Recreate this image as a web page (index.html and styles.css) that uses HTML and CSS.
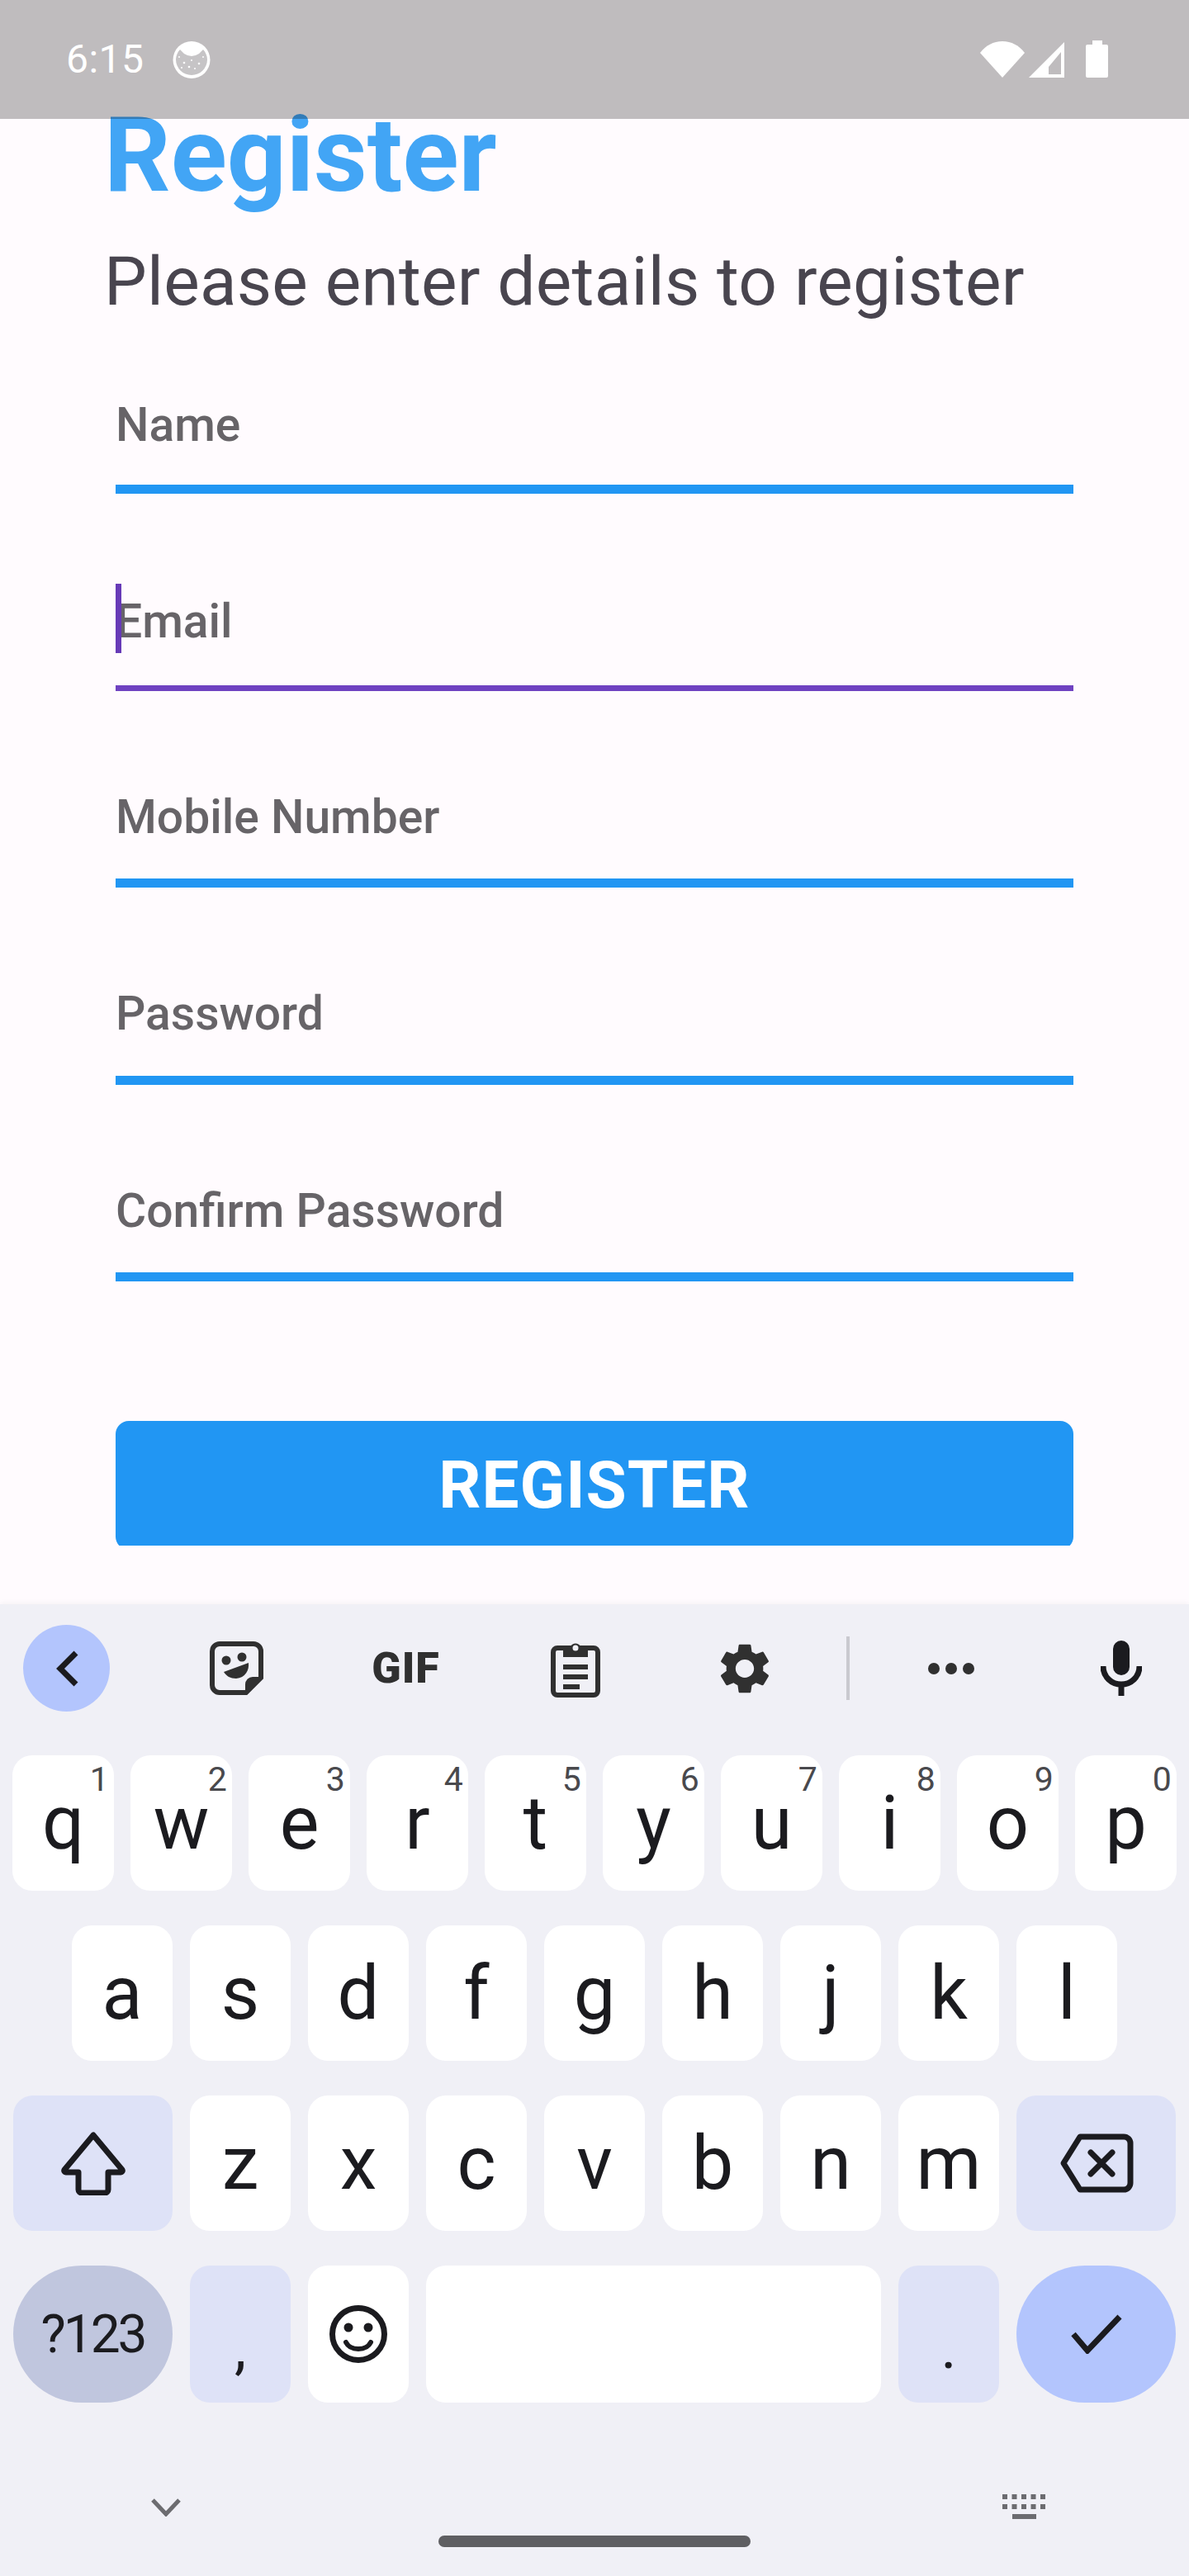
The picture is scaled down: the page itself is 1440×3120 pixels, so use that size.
FILE: index.html
```html
<!DOCTYPE html>
<html lang="en">

<head>
    <meta charset="UTF-8">
    <title>Register</title>
    <link rel="stylesheet" href="styles.css">
</head>

<body>
    <div class="screen">
        <!-- status bar is see-through, the title runs under it -->
        <div class="status">
            <span class="time">6:15</span>
            <svg class="status-face" viewBox="0 0 48 46">
                <circle cx="24" cy="22.500" r="22.500" fill="#fff" />
                <path d="M10 10L15 15Q24 21 33 15L38 10C41 13 43 18 43 22A19 19 0 0 1 5 22C5 18 7 13 10 10z" fill="#c6c4c6" />
                <circle cx="9" cy="19" r="1" fill="#fff" />
                <circle cx="15" cy="26" r="1.300" fill="#fff" />
                <circle cx="24" cy="23" r="1" fill="#fff" />
                <circle cx="33" cy="27" r="1.300" fill="#fff" />
                <circle cx="38" cy="19" r="1" fill="#fff" />
                <circle cx="21" cy="31" r="1.300" fill="#fff" />
                <circle cx="28" cy="33" r="1" fill="#fff" />
                <circle cx="12" cy="32" r="1" fill="#fff" />
            </svg>
            <span class="status-gap"></span>
            <svg class="status-wifi" viewBox="0 0 54 44">
                <path d="M0 14C7 5 16 0 27 0s20 5 27 14L27 44z" fill="#fff" />
            </svg>
            <svg class="status-signal" viewBox="0 0 43 43">
                <path fill-rule="evenodd" d="M43 0v43H0zM39 12L24 30v9h15z" fill="#fff" />
            </svg>
            <svg class="status-battery" viewBox="0 0 27 45">
                <path d="M8 0h12v5h5a2 2 0 0 1 2 2v36a2 2 0 0 1-2 2H2a2 2 0 0 1-2-2V7a2 2 0 0 1 2-2h6z" fill="#fff" />
            </svg>
        </div>

        <main class="content">
            <h1 class="title">Register</h1>
            <p class="subtitle">Please enter details to register</p>

            <form class="form">
                <div class="field"><label>Name</label></div>
                <div class="field field-focus"><i class="caret"></i><label>Email</label></div>
                <div class="field"><label>Mobile Number</label></div>
                <div class="field"><label>Password</label></div>
                <div class="field"><label>Confirm Password</label></div>
                <div class="button-clip"><button class="register" type="button">REGISTER</button></div>
            </form>
        </main>

        <div class="keyboard">
            <div class="tools">
                <span class="tool-back">
                    <svg width="32" height="46" viewBox="0 0 32 46">
                        <path d="M27 4L8 23l19 19" fill="none" stroke="#1b1b1f" stroke-width="7" />
                    </svg>
                </span>
                <span class="tool">
                    <svg width="65" height="65" viewBox="0 0 65 65">
                        <path d="M12 3h41a9 9 0 0 1 9 9v32L44 62H12a9 9 0 0 1-9-9V12a9 9 0 0 1 9-9z" fill="none" stroke="#303030" stroke-width="6" />
                        <path d="M62 43H52a9 9 0 0 0-9 9v10z" fill="#303030" />
                        <ellipse cx="20" cy="23" rx="5.500" ry="5.500" fill="#303030" />
                        <ellipse cx="39" cy="19" rx="5.500" ry="5.500" fill="#303030" />
                        <path d="M17 37l30-11c1 9-4 18-15 19-7 0-12-3-15-8z" fill="#303030" />
                    </svg>
                </span>
                <span class="tool gif">GIF</span>
                <span class="tool">
                    <svg width="60" height="70" viewBox="0 0 60 70">
                        <path d="M8 10h44a5 5 0 0 1 5 5v47a5 5 0 0 1-5 5H8a5 5 0 0 1-5-5V15a5 5 0 0 1 5-5z" fill="none" stroke="#303030" stroke-width="6" />
                        <path d="M15 8h9a7 7 0 0 1 12 0h9v13H15z" fill="#303030" />
                        <circle cx="30" cy="10" r="3.500" fill="#f0f0f6" />
                        <path d="M15 30h30v6H15zM15 42h30v6H15zM15 54h20v6H15z" fill="#303030" />
                    </svg>
                </span>
                <span class="tool">
                    <svg width="62" height="64" viewBox="0 0 24 24" preserveAspectRatio="none">
                        <path d="M19.140 12.940c.04-.3.06-.61.06-.94 0-.32-.02-.64-.07-.94l2.030-1.580a.49.49 0 0 0 .12-.61l-1.920-3.320a.488.488 0 0 0-.59-.22l-2.390.96c-.5-.38-1.030-.7-1.620-.94l-.36-2.540a.484.484 0 0 0-.48-.41h-3.840c-.24 0-.43.17-.47.41l-.36 2.540c-.59.24-1.130.57-1.620.94l-2.390-.96c-.22-.08-.47 0-.59.22L2.740 8.870c-.12.21-.08.47.12.61l2.030 1.580c-.05.3-.09.63-.09.94s.02.64.07.94l-2.030 1.580a.49.49 0 0 0-.12.61l1.920 3.320c.12.22.37.29.59.22l2.390-.96c.5.38 1.030.7 1.620.94l.36 2.540c.05.24.24.41.48.41h3.840c.24 0 .44-.17.47-.41l.36-2.540c.59-.24 1.130-.56 1.620-.94l2.390.96c.22.08.47 0 .59-.22l1.920-3.320c.12-.22.07-.47-.12-.61l-2.010-1.580zM12 15.600c-1.980 0-3.600-1.620-3.600-3.600s1.620-3.600 3.600-3.600 3.600 1.620 3.600 3.600-1.620 3.600-3.600 3.600z" fill="#303030" transform="translate(-2.400 -1.700) scale(1.200 1.140)" />
                    </svg>
                </span>
                <span class="tool-divider"></span>
                <span class="tool">
                    <svg width="56" height="14" viewBox="0 0 56 14">
                        <circle cx="7" cy="7" r="7" fill="#303030" />
                        <circle cx="28" cy="7" r="7" fill="#303030" />
                        <circle cx="49" cy="7" r="7" fill="#303030" />
                    </svg>
                </span>
                <span class="tool tool-mic">
                    <svg width="50" height="67" viewBox="0 0 50 67">
                        <rect x="15" y="0" width="20" height="42" rx="10" fill="#1b1b1f" />
                        <path d="M3 31c0 13 10 22 22 22s22-9 22-22" fill="none" stroke="#1b1b1f" stroke-width="7" />
                        <path d="M25 52v15" stroke="#1b1b1f" stroke-width="7" />
                    </svg>
                </span>
            </div>

            <div class="keys" id="keys"></div>

            <div class="nav">
                <svg class="nav-down" width="36" height="22" viewBox="0 0 36 22">
                    <path d="M2 2l16 17L34 2" fill="none" stroke="#6c6c70" stroke-width="5" />
                </svg>
                <span class="handle"></span>
                <svg class="nav-kbd" width="52" height="30" viewBox="0 0 52 30">
                    <path d="M0 0h6v6H0zM11.500 0h6v6h-6zM23 0h6v6h-6zM34.500 0h6v6h-6zM46 0h6v6h-6zM0 12h6v6H0zM11.500 12h6v6h-6zM23 12h6v6h-6zM34.500 12h6v6h-6zM46 12h6v6h-6zM12 24h29v6H12z" fill="#6c6c70" />
                </svg>
            </div>
        </div>
    </div>

    <script>
        var shiftIcon = '<svg width="80" height="78" viewBox="0 0 80 78"><path d="M40 5L5 47a2 2 0 0 0 2 3h15v21a4 4 0 0 0 4 4h28a4 4 0 0 0 4-4V50h15a2 2 0 0 0 2-3z" fill="none" stroke="#1b1b1f" stroke-width="7" stroke-linejoin="round"/></svg>';
        var backIcon = '<svg width="90" height="72" viewBox="0 0 90 72"><path d="M25 4h53a8 8 0 0 1 8 8v48a8 8 0 0 1-8 8H25L5 36z" fill="none" stroke="#1b1b1f" stroke-width="7" stroke-linejoin="round"/><path d="M38 23l26 26M64 23L38 49" fill="none" stroke="#1b1b1f" stroke-width="7" stroke-linecap="round"/></svg>';
        var smileIcon = '<svg width="70" height="70" viewBox="0 0 70 70"><circle cx="35" cy="35" r="31.500" fill="none" stroke="#1b1b1f" stroke-width="7"/><circle cx="23" cy="27" r="5.500" fill="#1b1b1f"/><circle cx="47" cy="27" r="5.500" fill="#1b1b1f"/><path d="M20 45c3 6 9 8 15 8s12-2 15-8" fill="none" stroke="#1b1b1f" stroke-width="6" stroke-linecap="round"/></svg>';
        var checkIcon = '<svg width="62" height="48" viewBox="0 0 62 48"><path d="M3 24l17 20L59 3" fill="none" stroke="#1b1b1f" stroke-width="7"/></svg>';

        var rows = [
            { name: 'row-top', keys: ['q', 'w', 'e', 'r', 't', 'y', 'u', 'i', 'o', 'p'] },
            { name: 'row-home', keys: ['a', 's', 'd', 'f', 'g', 'h', 'j', 'k', 'l'] },
            { name: 'row-low', keys: [{ html: shiftIcon, cls: 'wide mod' }, 'z', 'x', 'c', 'v', 'b', 'n', 'm', { html: backIcon, cls: 'wide mod' }] },
            {
                name: 'row-last', keys: [
                    { text: '?123', cls: 'wide pill sym' },
                    { text: ',', cls: 'mod punct' },
                    { html: smileIcon, cls: '' },
                    { text: '', cls: 'space' },
                    { text: '.', cls: 'mod punct' },
                    { html: checkIcon, cls: 'wide pill enter' }
                ]
            }
        ];
        var hints = '1234567890';

        var box = document.getElementById('keys');
        for (var r = 0; r < rows.length; r++) {
            var row = document.createElement('div');
            row.className = 'row ' + rows[r].name;
            for (var k = 0; k < rows[r].keys.length; k++) {
                var item = rows[r].keys[k];
                var key = document.createElement('kbd');
                if (typeof item === 'string') {
                    key.textContent = item;
                    if (r === 0) {
                        var hint = document.createElement('sup');
                        hint.textContent = hints[k];
                        key.appendChild(hint);
                    }
                } else {
                    key.className = item.cls;
                    if (item.html) {
                        key.innerHTML = item.html;
                    } else {
                        key.textContent = item.text;
                    }
                }
                row.appendChild(key);
            }
            box.appendChild(row);
        }
    </script>
</body>

</html>
```

FILE: styles.css
```css
* {
    padding: 0;
    margin: 0;
    box-sizing: border-box;
    font-family: Roboto, "Liberation Sans", sans-serif;
}

body {
    background-color: #fffbfe;
}

.screen {
    width: 1440px;
    height: 3120px;
    position: relative;
    overflow: hidden;
    display: flex;
    flex-direction: column;
}

/* status bar */
.status {
    position: absolute;
    left: 0;
    top: 0;
    width: 100%;
    height: 144px;
    padding: 0 98px 0 80px;
    display: flex;
    align-items: center;
    background-color: rgba(0, 0, 0, 0.25);
    color: white;
}

.time {
    font-size: 48px;
    line-height: 48px;
    letter-spacing: 0.5px;
    margin-right: 33px;
}

.status-face {
    width: 48px;
    height: 46px;
    margin-top: 1px;
}

.status-gap {
    flex: 1;
}

.status-wifi {
    width: 54px;
    height: 44px;
}

.status-signal {
    width: 43px;
    height: 43px;
    margin-left: 5px;
    margin-top: 1px;
}

.status-battery {
    width: 27px;
    height: 45px;
    margin-left: 26px;
    margin-top: -1px;
}

/* form */
.content {
    height: 1943px;
    padding: 108px 140px 0;
    overflow: hidden;
}

.title {
    font-size: 126px;
    line-height: 160px;
    font-weight: 700;
    color: #42a5f5;
    margin-left: -14px;
}

.subtitle {
    font-size: 82px;
    line-height: 100px;
    letter-spacing: 0.25px;
    color: #49454f;
    margin-left: -14px;
    margin-top: 23px;
}

.field {
    height: 238.500px;
    padding-top: 121px;
    border-bottom: 11px solid #2196f3;
    position: relative;
}

.field:first-child {
    height: 207px;
    padding-top: 92px;
}

.field label {
    display: block;
    font-size: 57px;
    line-height: 64px;
    font-weight: 500;
    color: #676468;
}

.field-focus {
    padding-top: 123px;
    border-bottom: 7px solid #6f42c1;
}

.caret {
    position: absolute;
    left: 0;
    top: 109px;
    width: 7px;
    height: 84px;
    background-color: #673ab7;
}

.button-clip {
    margin-top: 169px;
    height: 151px;
    overflow: hidden;
}

.register {
    display: block;
    width: 100%;
    height: 156px;
    border: none;
    border-radius: 16px;
    background-color: #2196f3;
    color: white;
    font-size: 80px;
    font-weight: 700;
    letter-spacing: 1px;
}

/* keyboard */
.keyboard {
    flex: 1;
    background-color: #f0f0f6;
    box-shadow: 0 -2px 6px rgba(0, 0, 0, 0.04);
    position: relative;
}

.tools {
    height: 183px;
    padding-bottom: 28px;
    display: grid;
    grid-template-columns: 184px 205px 205px 205px 205px 46px 204px 22px 164px;
    align-items: center;
}

.tool-back {
    width: 105px;
    height: 105px;
    margin-left: 28px;
    border-radius: 50%;
    background-color: #b3c5fd;
    display: flex;
    align-items: center;
    justify-content: center;
}

.tool {
    display: flex;
    justify-content: center;
    align-items: center;
}

.gif {
    font-size: 52px;
    font-weight: 900;
    letter-spacing: 1px;
    color: #303030;
}

.tool-divider {
    width: 4px;
    height: 77px;
    justify-self: center;
    background-color: #c9c9cf;
}

.tool-mic {
    grid-column: 9;
}

.keys {
    padding: 0 17px;
}

.row {
    display: flex;
    justify-content: center;
    gap: 20.500px;
    margin-bottom: 42px;
}

kbd {
    width: 122.500px;
    height: 164px;
    flex: none;
    border-radius: 24px;
    background-color: white;
    color: #1b1b1f;
    font-size: 90px;
    display: flex;
    align-items: center;
    justify-content: center;
    position: relative;
}

kbd sup {
    position: absolute;
    right: 6px;
    top: 5px;
    font-size: 41px;
    line-height: 48px;
    color: #49494d;
}

.row-last kbd {
    height: 166px;
}

kbd.wide {
    width: 193.500px;
}

kbd.mod {
    background-color: #dee2f7;
}

kbd.pill {
    border-radius: 83px;
}

kbd.sym {
    background-color: #c0c6de;
    font-size: 64px;
    letter-spacing: -3px;
}

kbd.enter {
    background-color: #b3c5fd;
}

kbd.punct {
    font-size: 72px;
    padding-top: 32px;
}

kbd.space {
    width: 551.500px;
}

.nav {
    position: relative;
    height: 168px;
}

.nav-down {
    position: absolute;
    left: 183px;
    top: 74px;
}

.handle {
    position: absolute;
    left: 531px;
    top: 119px;
    width: 378px;
    height: 14px;
    border-radius: 7px;
    background-color: #5f5f62;
}

.nav-kbd {
    position: absolute;
    left: 1214px;
    top: 69px;
}
```
